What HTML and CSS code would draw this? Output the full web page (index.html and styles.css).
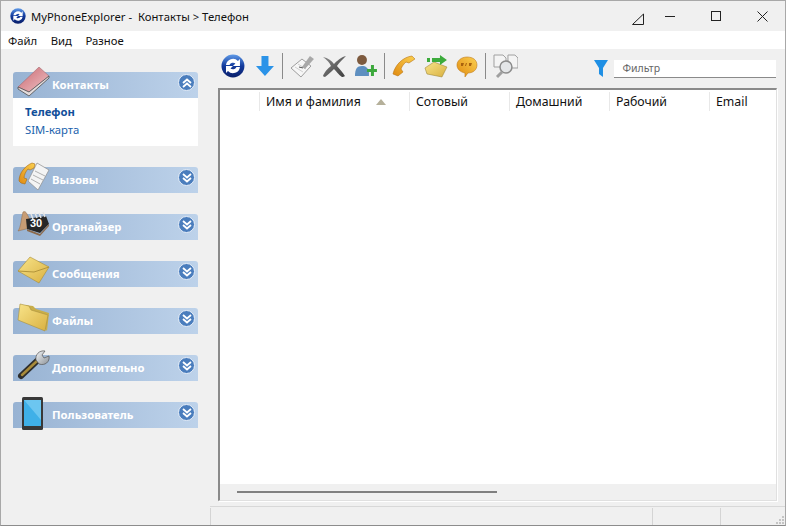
FILE: index.html
```html
<!DOCTYPE html>
<html>
<head>
    <title>MyPhoneExplorer - Контакты > Телефон</title>
    <link rel="stylesheet" href="styles.css">
</head>
<body>
<div class="window">
    <div class="titlebar">
        <svg class="app-icon" width="16" height="16" viewBox="0 0 24 24">
            <defs>
                <linearGradient id="globe" x1="0" y1="0" x2="0" y2="1"><stop offset="0" stop-color="#5f9ae8"/><stop offset=".5" stop-color="#123a9c"/><stop offset="1" stop-color="#0a1f6a"/></linearGradient>
                <linearGradient id="book" x1="0" y1="0" x2="1" y2="1"><stop offset="0" stop-color="#c9666e"/><stop offset="1" stop-color="#f0c4c8"/></linearGradient>
                <linearGradient id="gold" x1="0" y1="0" x2="1" y2="1"><stop offset="0" stop-color="#f8e48a"/><stop offset="1" stop-color="#d9b040"/></linearGradient>
                <linearGradient id="orange" x1="0" y1="1" x2="1" y2="0"><stop offset="0" stop-color="#e08a10"/><stop offset="1" stop-color="#fbd050"/></linearGradient>
                <linearGradient id="steel" x1="0" y1="0" x2="1" y2="1"><stop offset="0" stop-color="#f2f4f6"/><stop offset="1" stop-color="#8c9298"/></linearGradient>
                <linearGradient id="mute" x1="0" y1="0" x2="1" y2="1"><stop offset="0" stop-color="#8a8a8a"/><stop offset="1" stop-color="#3c3c3c"/></linearGradient>
            </defs>
            <circle cx="12" cy="12" r="11.500" fill="url(#globe)"/>
            <path d="M5 11a7 7 0 0 1 12-4l2-2v7h-7l2.500-2.500a4 4 0 0 0-6 1.500zM19 13a7 7 0 0 1-12 4l-2 2v-7h7l-2.500 2.500a4 4 0 0 0 6-1.500z" fill="#fff"/>
        </svg>
        <span class="title-text">MyPhoneExplorer -&nbsp; Контакты &gt; Телефон</span>
        <svg class="title-delta" width="13" height="12" viewBox="0 0 13 12"><path d="M.5 11.500h11V1z" fill="none" stroke="#222"/></svg>
        <div class="win-btn"><span class="win-min"></span></div>
        <div class="win-btn"><span class="win-max"></span></div>
        <div class="win-btn">
            <svg width="11" height="11" viewBox="0 0 11 11"><path d="M.5.500l10 10M10.500.500l-10 10" stroke="#222" fill="none"/></svg>
        </div>
    </div>
    <div class="menubar">
        <span>Файл</span><span>Вид</span><span>Разное</span>
    </div>
    <div class="main">
        <div class="sidebar">
            <div class="panel">
                <div class="panel-head">
                    <svg class="panel-icon" width="34" height="30" viewBox="0 0 34 30">
                        <path d="M1 20L22 0l10 9-20 16z" fill="url(#book)" stroke="#9a6066" stroke-width=".5"/>
                        <path d="M1 20v2l11 7 20-18V9L12 25z" fill="#e4dcdc" stroke="#4e4e4e" stroke-width=".8"/>
                    </svg>
                    <span class="panel-title">Контакты</span>
                    <span class="panel-toggle"><svg width="12" height="12" viewBox="0 0 12 12"><path d="M2 6l4-3.500L10 6M2 10l4-3.500L10 10" fill="none" stroke="#fff" stroke-width="1.800"/></svg></span>
                </div>
                <div class="panel-body">
                    <a class="current">Телефон</a>
                    <a>SIM-карта</a>
                </div>
            </div>
            <div class="panel">
                <div class="panel-head">
                    <svg class="panel-icon" width="34" height="30" viewBox="0 0 34 30">
                        <path d="M11 19L20 1l12 7-11 20z" fill="#f4f4f4" stroke="#8c8c8c" stroke-width=".7"/>
                        <path d="M18 9l10 5M16 13l10 5M14 17l9 5" stroke="#b0b0b0"/>
                        <path d="M2 19C2 11 8 4 15 1l3 1-1 4-4 2-2-1c-2 2-4 6-4 9l3 1-2 5-4-1z" fill="url(#orange)" stroke="#a86a10" stroke-width=".6"/>
                    </svg>
                    <span class="panel-title">Вызовы</span>
                    <span class="panel-toggle"><svg width="12" height="12" viewBox="0 0 12 12"><path d="M2 2l4 3.500L10 2M2 6l4 3.500L10 6" fill="none" stroke="#fff" stroke-width="1.800"/></svg></span>
                </div>
            </div>
            <div class="panel">
                <div class="panel-head">
                    <svg class="panel-icon" width="34" height="30" viewBox="0 0 34 30">
                        <path d="M1 22C4 18 4 10 6 3c2-1 3 0 4 2 3 5 4 10 7 13z" fill="#c79c74" stroke="#8c6a4a" stroke-width=".5"/>
                        <path d="M9 10l20-3 3 8-9 9-13-4z" fill="#262626"/>
                        <path d="M10 20l13 5 9-10v2l-9 10-13-5z" fill="#8b6a4c"/>
                        <path d="M14 5l2 5M18 4l2 5M22 4l2 5M26 3l2 5" stroke="#e4e4e4" stroke-width="1.500"/>
                        <text x="13" y="18" class="cal-num">30</text>
                    </svg>
                    <span class="panel-title">Органайзер</span>
                    <span class="panel-toggle"><svg width="12" height="12" viewBox="0 0 12 12"><path d="M2 2l4 3.500L10 2M2 6l4 3.500L10 6" fill="none" stroke="#fff" stroke-width="1.800"/></svg></span>
                </div>
            </div>
            <div class="panel">
                <div class="panel-head">
                    <svg class="panel-icon" width="34" height="30" viewBox="0 0 34 30">
                        <path d="M1 15L13 1l19 10-10 16z" fill="url(#gold)" stroke="#a98c30" stroke-width=".6"/>
                        <path d="M1 15l16 1 15-5" fill="none" stroke="#b2943a"/>
                    </svg>
                    <span class="panel-title">Сообщения</span>
                    <span class="panel-toggle"><svg width="12" height="12" viewBox="0 0 12 12"><path d="M2 2l4 3.500L10 2M2 6l4 3.500L10 6" fill="none" stroke="#fff" stroke-width="1.800"/></svg></span>
                </div>
            </div>
            <div class="panel">
                <div class="panel-head">
                    <svg class="panel-icon" width="34" height="30" viewBox="0 0 34 30">
                        <path d="M8 2l8 1 3 3 13 4-2 18z" fill="#c9ae4a"/>
                        <path d="M3 1l9 2 2 4 17 5-3 16L1 17z" fill="url(#gold)" stroke="#a88f3a" stroke-width=".6"/>
                    </svg>
                    <span class="panel-title">Файлы</span>
                    <span class="panel-toggle"><svg width="12" height="12" viewBox="0 0 12 12"><path d="M2 2l4 3.500L10 2M2 6l4 3.500L10 6" fill="none" stroke="#fff" stroke-width="1.800"/></svg></span>
                </div>
            </div>
            <div class="panel">
                <div class="panel-head">
                    <svg class="panel-icon" width="34" height="30" viewBox="0 0 34 30">
                        <path d="M4 26L21 10" stroke="#2e2e2e" stroke-width="6" stroke-linecap="round"/>
                        <path d="M5 25L20 11" stroke="#a88b3a" stroke-width="2.500" stroke-linecap="round"/>
                        <path d="M19 10c-1-5 3-10 9-9l-3 4 2 3 5-2c1 6-4 10-10 8z" fill="url(#steel)" stroke="#555" stroke-width=".7"/>
                    </svg>
                    <span class="panel-title">Дополнительно</span>
                    <span class="panel-toggle"><svg width="12" height="12" viewBox="0 0 12 12"><path d="M2 2l4 3.500L10 2M2 6l4 3.500L10 6" fill="none" stroke="#fff" stroke-width="1.800"/></svg></span>
                </div>
            </div>
            <div class="panel">
                <div class="panel-head">
                    <svg class="panel-icon" width="34" height="34" viewBox="0 0 34 34">
                        <rect x="5" y="0" width="21" height="33" rx="1.500" fill="#383838"/>
                        <rect x="7" y="3" width="17" height="26" fill="#3fb0e8"/>
                        <path d="M7 3l17 20V3z" fill="#6cc6f0"/>
                    </svg>
                    <span class="panel-title">Пользователь</span>
                    <span class="panel-toggle"><svg width="12" height="12" viewBox="0 0 12 12"><path d="M2 2l4 3.500L10 2M2 6l4 3.500L10 6" fill="none" stroke="#fff" stroke-width="1.800"/></svg></span>
                </div>
            </div>
        </div>
        <div class="content">
            <div class="toolbar">
                <svg width="24" height="24" viewBox="0 0 24 24">
                    <circle cx="12" cy="12" r="11.500" fill="url(#globe)"/>
                    <path d="M5 11a7 7 0 0 1 12-4l2-2v7h-7l2.500-2.500a4 4 0 0 0-6 1.500zM19 13a7 7 0 0 1-12 4l-2 2v-7h7l-2.500 2.500a4 4 0 0 0 6-1.500z" fill="#fff"/>
                </svg>
                <svg class="tool-next" width="20" height="22" viewBox="0 0 20 22"><path d="M6.500 1h7v10H19l-9 10-9-10h5.500z" fill="#2b93e8"/></svg>
                <span class="tool-sep"></span>
                <svg width="25" height="24" viewBox="0 0 25 24">
                    <path d="M1 14L12 5l9 7-10 11z" fill="#f6f6f6" stroke="#9c9c9c"/>
                    <path d="M5 13l8 5M8 10l8 5" stroke="#cfcfcf"/>
                    <path d="M12 13l8-11 4 3-9 10z" fill="#a8a8a8"/>
                    <path d="M9 13l4 1" stroke="#555"/>
                </svg>
                <svg width="23" height="24" viewBox="0 0 23 24"><path d="M0 3c5 1 9 4 11 7 3-3 7-7 12-8-3 3-7 7-9 10 3 3 6 7 8 10-1 1-2 1-3 1-3-2-6-6-8-8-3 3-6 6-9 8-1 0-2-1-2-1 1-3 5-8 8-10C7 9 4 6 0 3z" fill="url(#mute)"/></svg>
                <svg width="23" height="24" viewBox="0 0 23 24">
                    <circle cx="8" cy="6" r="5" fill="#7d5a3e"/>
                    <path d="M1 22c0-7 2-10 7-10 4 0 6 2 7 6v4z" fill="#5e8fc0"/>
                    <path d="M13 15h4v-4h3v4h3v3h-3v4h-3v-4h-4z" fill="#3ca83c"/>
                </svg>
                <span class="tool-sep"></span>
                <svg width="24" height="24" viewBox="0 0 24 24"><path d="M1 20C3 11 11 3 20 2l3 3-6 4-3-1c-2 2-4 4-5 7l2 3-5 4z" fill="url(#orange)" stroke="#b87410" stroke-width=".6"/></svg>
                <svg width="24" height="24" viewBox="0 0 24 24">
                    <path d="M1 14l9-6 13 5-5 10L3 20z" fill="url(#gold)" stroke="#a08a3c" stroke-width=".6"/>
                    <path d="M3 4h3v4H3zM8 4h8V1l7 5-7 5V8H8z" fill="#3cab3c"/>
                </svg>
                <svg width="22" height="24" viewBox="0 0 22 24">
                    <path d="M11 3c6 0 10 3 10 8s-4 8-9 8l-3 4v-4C4 18 1 15 1 11s4-8 10-8z" fill="url(#orange)" stroke="#c07a1a" stroke-width=".6"/>
                    <path d="M5 9h3l-1 3H5zM10 9h1l-1 3H9zM13 9h3l-1 3h-2z" fill="#a8620e"/>
                </svg>
                <span class="tool-sep"></span>
                <svg width="26" height="24" viewBox="0 0 26 24">
                    <path d="M1 1h9l3 3v9H1zM15 1h7l3 3v10H15z" fill="#f4f4f4" stroke="#a0a0a0"/>
                    <circle cx="13" cy="13" r="6" fill="#e4e6e8" stroke="#8c8c8c" stroke-width="1.500"/>
                    <path d="M9 18l-5 5" stroke="#a0a0a0" stroke-width="3"/>
                </svg>
                <svg class="filter-icon" width="14" height="17" viewBox="0 0 14 17"><path d="M0 0h14L9 8v9L5 14V8z" fill="#1f8fe4"/></svg>
                <div class="filter-box">Фильтр</div>
            </div>
            <div class="list">
                <div class="list-head">
                    <div class="col col-mark"></div>
                    <div class="col col-name">Имя и фамилия<span class="sort-mark"></span></div>
                    <div class="col col-std">Сотовый</div>
                    <div class="col col-std">Домашний</div>
                    <div class="col col-std">Рабочий</div>
                    <div class="col">Email</div>
                </div>
                <div class="list-body"></div>
                <div class="list-scroll"><span class="scroll-thumb"></span></div>
            </div>
        </div>
    </div>
    <div class="statusbar">
        <div class="status-cell status-wide"></div>
        <div class="status-cell status-mid"></div>
        <div class="status-cell status-last">
            <svg width="10" height="10" viewBox="0 0 10 10"><path d="M7 1h2v2H7zM4 4h2v2H4zM7 4h2v2H7zM1 7h2v2H1zM4 7h2v2H4zM7 7h2v2H7z" fill="#c4c4c4"/></svg>
        </div>
    </div>
</div>
</body>
</html>
```

FILE: styles.css
```css
* {
    box-sizing: border-box;
}
html, body {
    margin: 0;
    height: 100%;
    overflow: hidden;
}
body {
    font-family: "Noto Sans", "Open Sans", sans-serif;
    font-size: 11.3px;
    color: #111;
}
.window {
    height: 526px;
    display: flex;
    flex-direction: column;
    background-color: #f0f0f0;
    border: 1px solid #a8a8a8;
    border-bottom-color: #8c8c8c;
}
.titlebar {
    height: 30px;
    display: flex;
    align-items: center;
    padding-left: 9px;
    flex-shrink: 0;
}
.title-text {
    margin-left: 5px;
    flex: 1;
    white-space: nowrap;
}
.title-delta {
    margin-right: 2px;
    margin-top: 5px;
}
.win-btn {
    width: 46px;
    height: 30px;
    display: flex;
    align-items: center;
    justify-content: center;
}
.win-min {
    width: 10px;
    border-top: 1px solid #222;
}
.win-max {
    width: 10px;
    height: 10px;
    border: 1px solid #222;
}
.menubar {
    height: 18px;
    background-color: #fff;
    display: flex;
    align-items: center;
    gap: 13.5px;
    padding-left: 7px;
    flex-shrink: 0;
}
.main {
    flex: 1;
    display: flex;
    min-height: 0;
}
.sidebar {
    width: 217px;
    padding: 23px 0 0 12px;
    flex-shrink: 0;
}
.panel {
    width: 185px;
    margin-bottom: 21px;
}
.panel-head {
    position: relative;
    height: 26px;
    border-radius: 3px 3px 0 0;
    background: linear-gradient(90deg, #98b3d3 0%, #bdd2ea 100%);
    display: flex;
    align-items: center;
    padding: 0 0 2px 39px;
}
.panel-icon {
    position: absolute;
    left: 4px;
    top: -5px;
}
.panel-title {
    flex: 1;
    color: #fff;
    font-weight: bold;
    white-space: nowrap;
}
.panel-toggle {
    position: absolute;
    right: 3px;
    top: 2px;
    width: 17px;
    height: 17px;
    border-radius: 50%;
    background-color: #4a7dbd;
    border: 1px solid #e6eef8;
    display: flex;
    align-items: center;
    justify-content: center;
}
.panel-body {
    height: 48px;
    background-color: #fff;
    padding: 5px 0 0 12px;
    display: flex;
    flex-direction: column;
    line-height: 18px;
    color: #1a62ad;
}
.current {
    font-weight: bold;
    color: #12509a;
}
.cal-num {
    font-family: "Liberation Sans", sans-serif;
    font-size: 11px;
    font-weight: bold;
    fill: #fff;
}
.content {
    flex: 1;
    display: flex;
    flex-direction: column;
    min-width: 0;
    padding-right: 8px;
}
.toolbar {
    height: 39px;
    display: flex;
    align-items: center;
    gap: 8px;
    padding: 0 1px 6px 3px;
    flex-shrink: 0;
}
.tool-next {
    margin-left: 2px;
}
.tool-sep {
    width: 1px;
    height: 26px;
    background-color: #8a8a8a;
    margin: 0 -1px;
}
.filter-icon {
    margin-left: 68px;
    margin-top: 5px;
}
.filter-box {
    width: 162px;
    height: 18px;
    margin-left: -2px;
    margin-top: 7px;
    padding-left: 8px;
    background-color: #fff;
    border-bottom: 1px solid #8a8a8a;
    color: #666;
    font-size: 10.5px;
    line-height: 17px;
}
.list {
    flex: 1;
    background-color: #fff;
    border: 2px solid #8a8a8a;
    border-right: 1px solid #e0e0e0;
    border-bottom: 1px solid #e0e0e0;
    box-shadow: 1px 1px 0 #fff;
    display: flex;
    flex-direction: column;
    min-height: 0;
    margin-bottom: 5px;
}
.list-head {
    display: flex;
    height: 21px;
    padding-top: 2px;
    flex-shrink: 0;
    font-size: 12.3px;
}
.col {
    padding-left: 6px;
    border-right: 1px solid #e8e8e8;
    line-height: 19px;
    white-space: nowrap;
}
.col:last-child {
    border-right: none;
}
.col-mark {
    width: 40px;
}
.col-name {
    width: 150px;
    display: flex;
    align-items: center;
}
.col-std {
    width: 100px;
}
.sort-mark {
    margin-left: 15px;
    border-left: 5px solid transparent;
    border-right: 5px solid transparent;
    border-bottom: 6px solid #b5b09a;
}
.list-body {
    flex: 1;
}
.list-scroll {
    height: 16px;
    background-color: #f0f0f0;
    padding: 7px 0 0 17px;
    flex-shrink: 0;
}
.scroll-thumb {
    display: block;
    width: 260px;
    height: 2px;
    background-color: #808080;
}
.statusbar {
    height: 19px;
    margin-left: 209px;
    display: flex;
    border-top: 1px solid #d8d8d8;
    flex-shrink: 0;
}
.status-cell {
    border-left: 1px solid #d4d4d4;
    margin-top: 1px;
}
.status-wide {
    width: 442px;
}
.status-mid {
    width: 68px;
}
.status-last {
    flex: 1;
    display: flex;
    align-items: flex-end;
    justify-content: flex-end;
}
```
